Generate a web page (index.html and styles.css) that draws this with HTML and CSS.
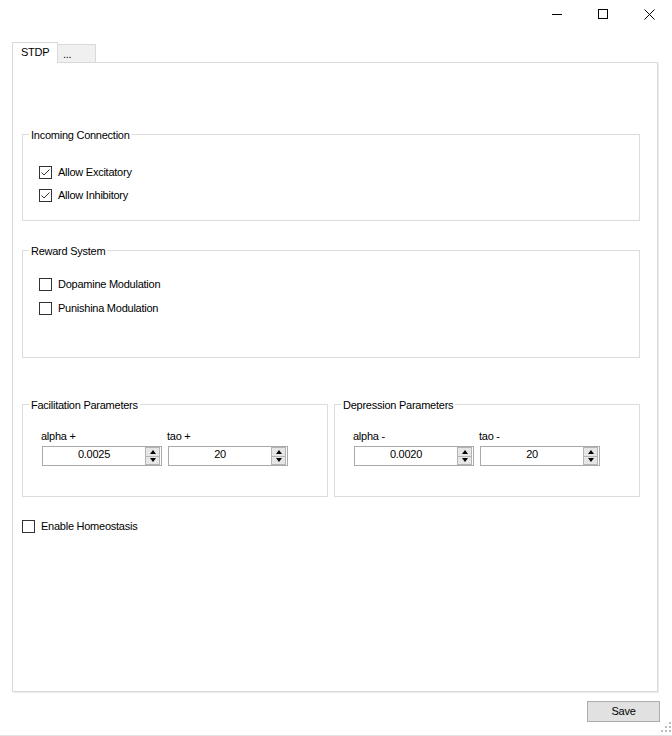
FILE: index.html
```html
<!DOCTYPE html>
<html>
<head>
<meta charset="utf-8">
<link rel="stylesheet" href="styles.css">
</head>
<body>
<div class="window">
  <div class="titlebar">
    <div class="cap-btn"><svg width="10" height="10" viewBox="0 0 10 10"><path d="M0 5.5H10" stroke="#000" stroke-width="1"/></svg></div>
    <div class="cap-btn"><svg width="10" height="10" viewBox="0 0 10 10"><rect x="0.5" y="0.5" width="9" height="9" fill="none" stroke="#000" stroke-width="1"/></svg></div>
    <div class="cap-btn"><svg width="11" height="11" viewBox="0 0 11 11"><path d="M0.5 0.5L10.5 10.5M10.5 0.5L0.5 10.5" stroke="#000" stroke-width="1"/></svg></div>
  </div>
  <div class="content">
    <div class="tabs">
      <div class="tab active">STDP</div>
      <div class="tab">...</div>
    </div>
    <div class="panel">
      <div class="group g-incoming">
        <div class="gtitle">Incoming Connection</div>
        <div class="checklist cl-incoming">
          <div class="check"><svg class="cb" width="13" height="13" viewBox="0 0 13 13"><rect x="0.5" y="0.5" width="12" height="12" fill="#fff" stroke="#333"/><path d="M2.5 6.5L5 9L10.5 3.5" fill="none" stroke="#333" stroke-width="1"/></svg><span>Allow Excitatory</span></div>
          <div class="check"><svg class="cb" width="13" height="13" viewBox="0 0 13 13"><rect x="0.5" y="0.5" width="12" height="12" fill="#fff" stroke="#333"/><path d="M2.5 6.5L5 9L10.5 3.5" fill="none" stroke="#333" stroke-width="1"/></svg><span>Allow Inhibitory</span></div>
        </div>
      </div>
      <div class="group g-reward">
        <div class="gtitle">Reward System</div>
        <div class="checklist cl-reward">
          <div class="check"><svg class="cb" width="13" height="13" viewBox="0 0 13 13"><rect x="0.5" y="0.5" width="12" height="12" fill="#fff" stroke="#333"/></svg><span>Dopamine Modulation</span></div>
          <div class="check"><svg class="cb" width="13" height="13" viewBox="0 0 13 13"><rect x="0.5" y="0.5" width="12" height="12" fill="#fff" stroke="#333"/></svg><span>Punishina Modulation</span></div>
        </div>
      </div>
      <div class="param-row">
        <div class="group g-param">
          <div class="gtitle">Facilitation Parameters</div>
          <div class="fields">
            <div class="field">
              <div class="flabel">alpha +</div>
              <div class="num"><div class="num-val">0.0025</div><div class="spin"><span class="up"><i class="tri-up"></i></span><span><i class="tri-down"></i></span></div></div>
            </div>
            <div class="field">
              <div class="flabel">tao +</div>
              <div class="num"><div class="num-val">20</div><div class="spin"><span class="up"><i class="tri-up"></i></span><span><i class="tri-down"></i></span></div></div>
            </div>
          </div>
        </div>
        <div class="group g-param">
          <div class="gtitle">Depression Parameters</div>
          <div class="fields">
            <div class="field">
              <div class="flabel">alpha -</div>
              <div class="num"><div class="num-val">0.0020</div><div class="spin"><span class="up"><i class="tri-up"></i></span><span><i class="tri-down"></i></span></div></div>
            </div>
            <div class="field">
              <div class="flabel">tao -</div>
              <div class="num"><div class="num-val">20</div><div class="spin"><span class="up"><i class="tri-up"></i></span><span><i class="tri-down"></i></span></div></div>
            </div>
          </div>
        </div>
      </div>
      <div class="check homeo"><svg class="cb" width="13" height="13" viewBox="0 0 13 13"><rect x="0.5" y="0.5" width="12" height="12" fill="#fff" stroke="#333"/></svg><span>Enable Homeostasis</span></div>
    </div>
    <div class="footer">
      <div class="btn">Save</div>
    </div>
  </div>
  <svg class="grip" width="10" height="10" viewBox="0 0 10 10">
    <rect x="8" y="0" width="2" height="2" fill="#bcbcbc"/>
    <rect x="4" y="4" width="2" height="2" fill="#bcbcbc"/>
    <rect x="8" y="4" width="2" height="2" fill="#bcbcbc"/>
    <rect x="0" y="8" width="2" height="2" fill="#bcbcbc"/>
    <rect x="4" y="8" width="2" height="2" fill="#bcbcbc"/>
    <rect x="8" y="8" width="2" height="2" fill="#bcbcbc"/>
  </svg>
</div>
</body>
</html>
```

FILE: styles.css
```css
* { box-sizing: border-box; }
html, body { margin: 0; padding: 0; background: #fff; }
body {
  font-family: "Liberation Sans", Arial, sans-serif;
  font-size: 11px;
  line-height: 13px;
  letter-spacing: -0.25px;
  color: #000;
}
.window {
  position: relative;
  width: 672px;
  height: 736px;
  background: #fff;
  border-bottom: 1px solid #e3e3e3;
  overflow: hidden;
}
.titlebar {
  height: 28px;
  display: flex;
  justify-content: flex-end;
}
.cap-btn {
  width: 46px;
  height: 28px;
  display: flex;
  align-items: center;
  justify-content: center;
}
.cap-btn svg { display: block; }
.content {
  padding: 14px 12px 0 12px;
}
.tabs {
  display: flex;
  align-items: flex-end;
  height: 20px;
}
.tab {
  height: 18px;
  width: 38px;
  padding: 3px 0 0 5px;
  background: #f0f0f0;
  border: 1px solid #d9d9d9;
  border-left: none;
  border-bottom: none;
}
.tab.active {
  position: relative;
  z-index: 1;
  width: 46px;
  height: 21px;
  margin-bottom: -1px;
  padding: 3px 0 0 8px;
  background: #fff;
  border-left: 1px solid #d9d9d9;
}
.panel {
  width: 646px;
  height: 630px;
  border: 1px solid #d9d9d9;
  box-shadow: 1px 1px 0 #ececec;
  padding: 0 17px 0 9px;
  display: flex;
  flex-direction: column;
  align-items: stretch;
}
.group {
  border: 1px solid #dcdcdc;
  display: flex;
  flex-direction: column;
  align-items: flex-start;
}
.gtitle {
  margin: -6px 0 0 6px;
  padding: 0 2px;
  background: #fff;
  line-height: 13px;
}
.g-incoming { margin-top: 71px; height: 87px; }
.g-reward { margin-top: 29px; height: 108px; }
.checklist {
  display: flex;
  flex-direction: column;
  padding-left: 16px;
}
.cl-incoming { margin-top: 22px; gap: 6px; }
.cl-reward { margin-top: 18px; gap: 7px; }
.check {
  display: flex;
  align-items: center;
  height: 17px;
  line-height: 17px;
}
.cb { display: block; flex: none; margin-right: 6px; }
.param-row {
  margin-top: 46px;
  display: flex;
  gap: 6px;
}
.g-param {
  width: 306px;
  height: 93px;
}
.fields {
  margin-top: 18px;
  padding-left: 19px;
  display: flex;
  gap: 6px;
}
.field {
  display: flex;
  flex-direction: column;
}
.flabel {
  margin-left: -1px;
  line-height: 13px;
  height: 13px;
  margin-bottom: 3px;
}
.num {
  width: 120px;
  height: 20px;
  border: 1px solid #a9a9a9;
  display: flex;
  align-items: flex-start;
  background: #fff;
}
.num-val {
  flex: 1;
  text-align: center;
  line-height: 15px;
}
.spin {
  width: 15px;
  height: 18px;
  margin-right: 1px;
  border: 1px solid #b4b4b4;
  background: #e6e6e6;
  display: flex;
  flex-direction: column;
}
.spin span {
  flex: 1;
  display: flex;
  align-items: center;
  justify-content: center;
}
.spin span.up { border-bottom: 1px solid #b4b4b4; }
.tri-up, .tri-down {
  display: block;
  width: 0;
  height: 0;
  border-left: 3.5px solid transparent;
  border-right: 3.5px solid transparent;
}
.tri-up { border-bottom: 4px solid #000; }
.tri-down { border-top: 4px solid #000; }
.homeo {
  margin-top: 21px;
  align-self: flex-start;
}
.footer {
  display: flex;
  justify-content: flex-end;
  margin-top: 9px;
}
.btn {
  width: 73px;
  height: 21px;
  border: 1px solid #adadad;
  background: #e1e1e1;
  text-align: center;
  line-height: 19px;
}
.grip {
  position: absolute;
  right: 1px;
  bottom: 3px;
  display: block;
}
```
